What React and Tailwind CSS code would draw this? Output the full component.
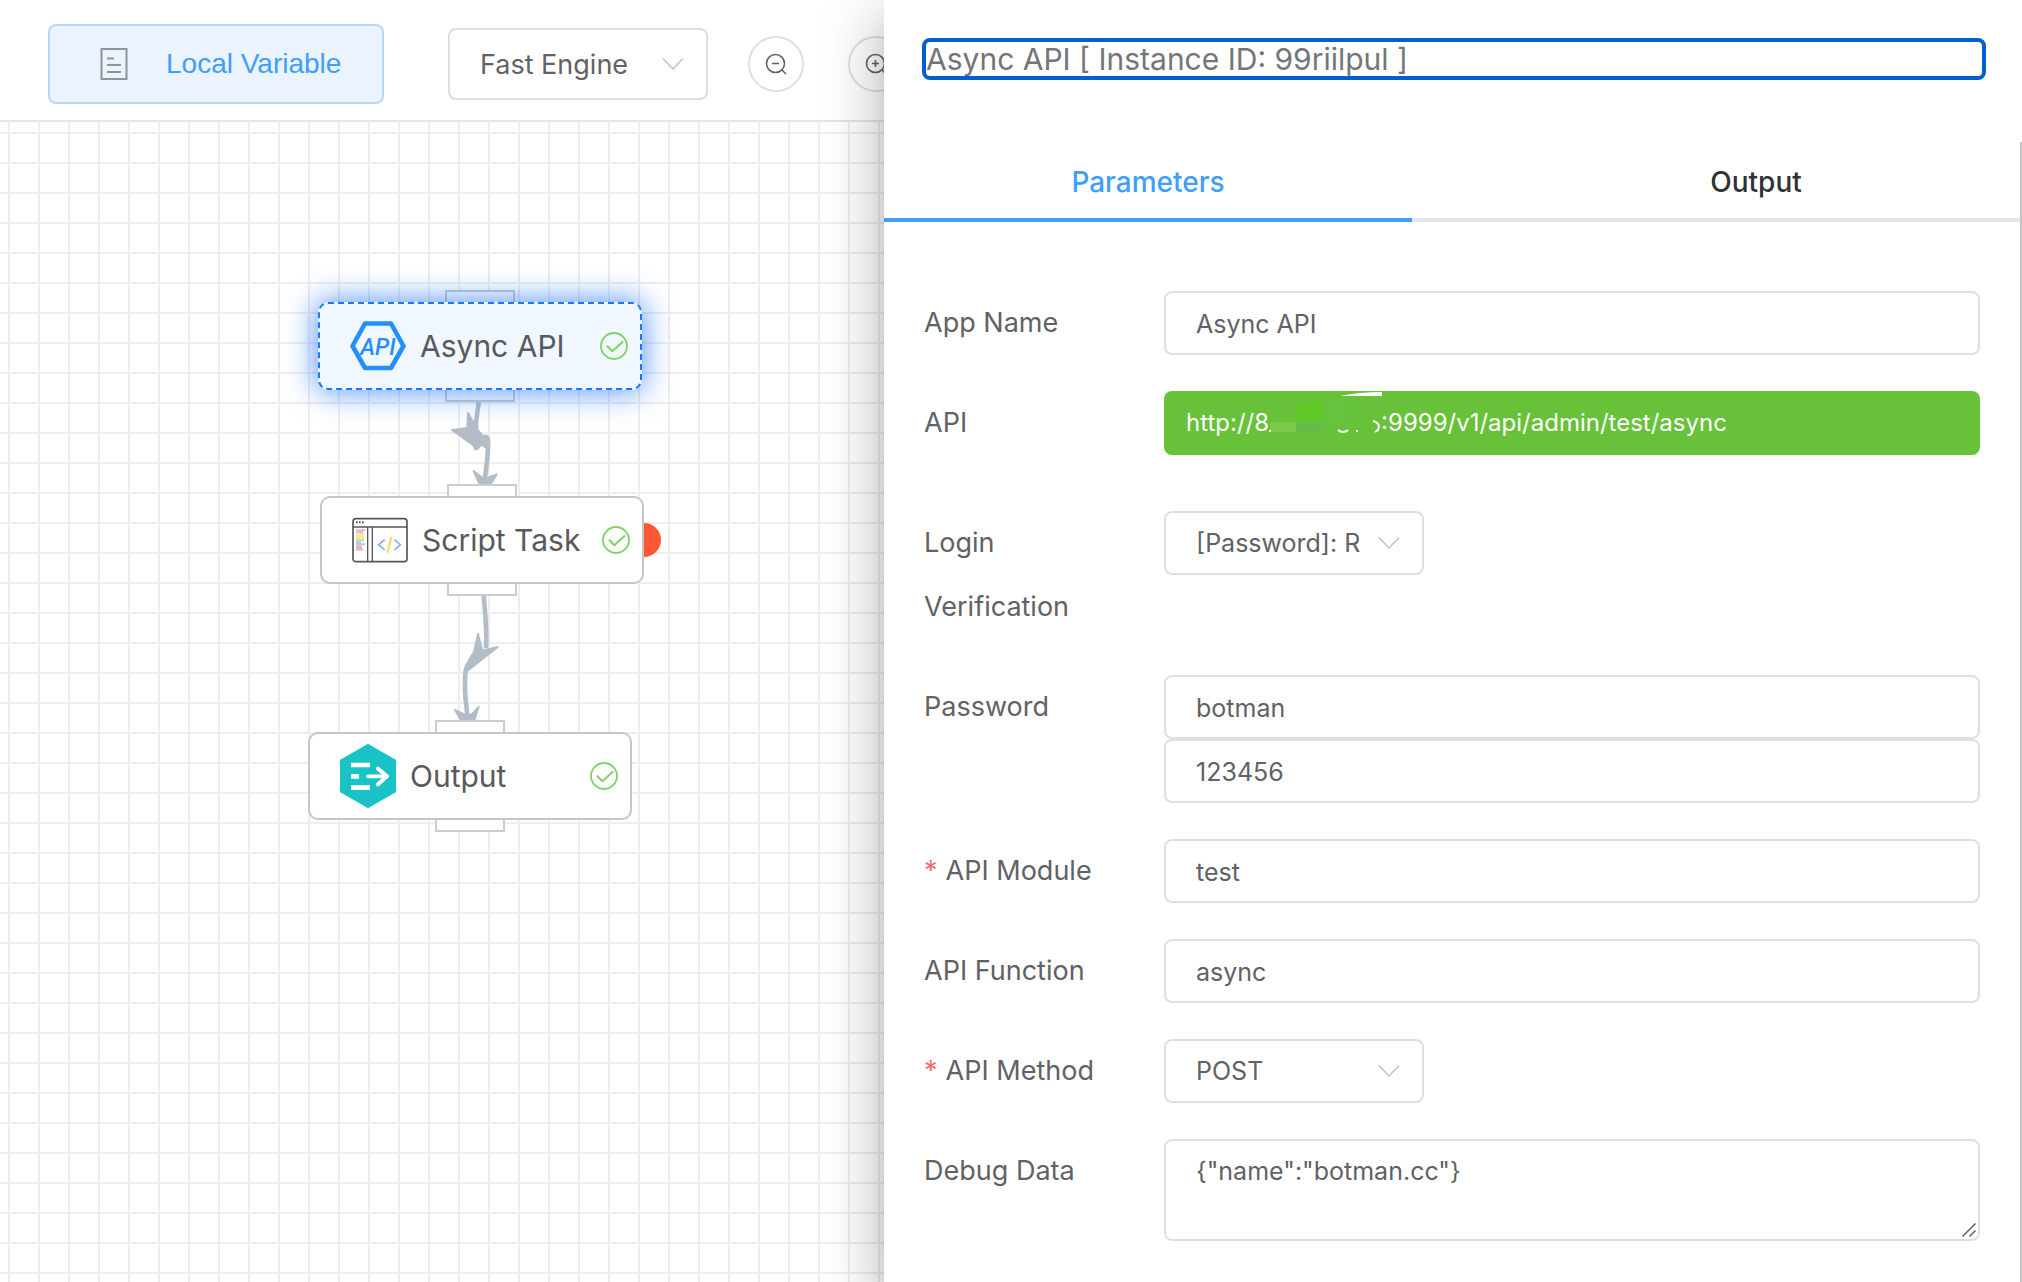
import React from "react";

const DocumentIcon = () => (
  <svg className="h-8 w-7 shrink-0" viewBox="0 0 28 32" fill="none" stroke="#909399" strokeWidth="2" aria-hidden="true">
    <rect x="1.5" y="1" width="25" height="30" />
    <path d="M7 10.5h7M7 17h14M7 24h14" />
  </svg>
);

const Chevron = () => (
  <svg
    className="pointer-events-none absolute top-1/2 right-6 h-3 w-[22px] -translate-y-1/2"
    viewBox="0 0 22 12"
    fill="none"
    stroke="#c0c4cc"
    strokeWidth="1.6"
    strokeLinecap="round"
    aria-hidden="true"
  >
    <path d="M1.500 1L11 11L20.500 1" />
  </svg>
);

const ZoomIcon = ({ plus }) => (
  <svg className="size-[22px] shrink-0" viewBox="0 0 22 22" fill="none" stroke="#606266" strokeWidth="1.6" aria-hidden="true">
    <circle cx="10.500" cy="10.500" r="9" />
    <path d="M17 17l4 4M7 10.500h7" />
    {plus && <path d="M10.500 7v7" />}
  </svg>
);

const CheckIcon = () => (
  <svg className="size-7 shrink-0" viewBox="0 0 28 28" fill="none" stroke="#7ed264" aria-label="Succeeded" role="img">
    <circle cx="14" cy="14" r="13" strokeWidth="1.8" />
    <path d="M7.500 14.200l4.800 5L22.500 10" strokeWidth="2" strokeLinecap="round" strokeLinejoin="round" />
  </svg>
);

const ApiIcon = () => (
  <svg className="h-16 w-14 shrink-0" viewBox="0 0 56 64" aria-hidden="true">
    <path
      d="M15 9.500h26L53.500 32L41 54H15L2.500 32z"
      fill="none"
      stroke="#2490ff"
      strokeWidth="4.600"
      strokeLinejoin="round"
    />
    <text
      x="28"
      y="40.500"
      textAnchor="middle"
      fill="#2490ff"
      className="font-['Roboto',sans-serif] text-[23px] font-medium italic"
    >
      API
    </text>
  </svg>
);

const ScriptIcon = () => (
  <svg className="h-16 w-14 shrink-0" viewBox="0 0 168 192" fill="none" aria-hidden="true">
    <rect x="3" y="32" width="162" height="129" rx="9" stroke="#55565a" strokeWidth="5" />
    <path d="M3 57h162M47 57v104M61 57v104" stroke="#55565a" strokeWidth="4" />
    <path d="M12 43h5M21 43h5M30 43h5" stroke="#55565a" strokeWidth="6" />
    <g strokeWidth="6">
      <path d="M12 67h27" stroke="#ffb0ab" />
      <path d="M12 73h21" stroke="#b0c8f5" />
      <path d="M12 79h27M12 85h24M12 91h24" stroke="#ffe699" />
      <path d="M12 97h24" stroke="#bcd8ae" />
      <path d="M12 103h15M12 109h27" stroke="#b0c8f5" />
      <path d="M12 115h18M12 120h19" stroke="#ffb0ab" />
      <path d="M12 125h21" stroke="#bcd8ae" />
    </g>
    <path d="M98 95L80 110L98 126M127 95L145 110L127 126" stroke="#84ade8" strokeWidth="5" />
    <path d="M118 87L106 134" stroke="#ffd43a" strokeWidth="5" />
  </svg>
);

const OutputIcon = () => (
  <svg className="h-16 w-14 shrink-0" viewBox="0 0 168 192" fill="none" aria-hidden="true">
    <path d="M84 4L164 50V142L84 188L4 142V50z" fill="#19c3c5" stroke="#19c3c5" strokeWidth="8" strokeLinejoin="round" />
    <path d="M33 63h57M33 97h24M33 131h57" stroke="#fff" strokeWidth="14" />
    <path d="M84 97h56" stroke="#fff" strokeWidth="11" strokeLinecap="round" />
    <path d="M114 74l27 23l-27 24" stroke="#fff" strokeWidth="12" strokeLinecap="round" strokeLinejoin="round" />
  </svg>
);

const Edges = () => (
  <svg className="absolute top-[148px] left-[290px] h-[480px] w-[400px]" viewBox="0 0 1200 1440" fill="none" stroke="#b2bdc7" aria-hidden="true">
    <g strokeWidth="14">
      <path d="M566 396C564 430 556 440 558 480" />
      <path d="M556 533C560 540 572 518 580 506C590 492 596 505 594 530C593 580 586 600 583 645" />
      <path d="M581 977C586 1040 592 1080 588 1135" />
      <path d="M540 1175C522 1195 526 1220 525 1260C526 1300 532 1320 533 1350" />
    </g>
    <g fill="#b2bdc7" strokeWidth="6" strokeLinejoin="round">
      <path d="M534 429L562 478L582 502L594 535L570 522L556 536L548 524L486 480L532 474z" />
      <path d="M551 603L578 624H592L620 613L603 641H568z" />
      <path d="M564 1092L577 1142L623 1131L531 1203L527 1196L538 1168L552 1146z" />
      <path d="M495 1320L524 1334H544L566 1311L553 1350H513z" />
    </g>
  </svg>
);

const Port = ({ place }) => (
  <span className={`absolute left-[127px] h-3.5 w-[70px] border-2 border-[#cccccc] bg-white ${place}`} />
);

function FlowNode({ icon, name, selected, breakpoint, position }) {
  return (
    <div className={`absolute h-[88px] w-[324px] ${position}`}>
      <Port place="-top-3" />
      <Port place="-bottom-3" />
      {breakpoint && <span className="absolute top-[27px] -right-[17px] size-[34px] rounded-full bg-[#ff5733]" />}
      <div
        className={`relative flex h-full items-center gap-3.5 rounded-[10px] border-2 pr-3 pl-[30px] ${
          selected
            ? "border-dashed border-[#1879ff] bg-[#f0f7ff] shadow-[0_0_30px_2px_rgba(24,110,255,0.7)]"
            : "border-[#c5c6cb] bg-white"
        }`}
      >
        {icon}
        <span className="grow text-[30px] text-[#58595c]">{name}</span>
        <CheckIcon />
      </div>
    </div>
  );
}

const fieldBox =
  "block w-full rounded-lg border-2 border-[#dcdfe6] bg-white pl-[30px] text-[#606266] outline-none";

function TextField({ id, label, value }) {
  return (
    <input id={id} aria-label={label} defaultValue={value} className={`${fieldBox} h-16 pt-0.5 pr-[30px] text-[25px]`} />
  );
}

function SelectField({ id, label, value, className }) {
  return (
    <div className="relative w-[260px]">
      <select
        id={id}
        aria-label={label}
        defaultValue={value}
        className={`${fieldBox} appearance-none pt-0.5 pr-14 ${className}`}
      >
        <option>{value}</option>
      </select>
      <Chevron />
    </div>
  );
}

function Row({ id, label, required, children }) {
  return (
    <div className="flex items-start">
      <label htmlFor={id} className="w-60 shrink-0 pr-10 text-[27px] leading-[64px] text-[#606266]">
        {required && <span className="mr-2 text-[#f56c6c]">*</span>}
        {label}
      </label>
      <div className="min-w-0 grow">{children}</div>
    </div>
  );
}

/* Mosaic that hides the host part of the address */
const HostMask = () => (
  <svg className="h-[60px] w-28 shrink-0 overflow-visible" viewBox="5 2 112 60" aria-hidden="true">
    <path d="M76 5Q96 1 118 1V5z" fill="#fff" />
    <path d="M32 14Q44 10 58 8V31H32z" fill="#5fc827" />
    <path d="M58 8H84V31H58z" fill="#66c340" />
    <path d="M6 31H32V41H6z" fill="#7ac94b" />
    <path d="M32 31H58V41H32z" fill="#64bd48" />
    <path d="M5 39h2v2h-2z" fill="#fff" />
    <path d="M74 39Q79 43 84 39M92 40h2M109 30Q117 32 114 39L111 41" fill="none" stroke="#fff" strokeWidth="2" />
  </svg>
);

function Drawer() {
  return (
    <aside className="absolute inset-y-0 right-0 flex w-[56.28%] flex-col bg-white shadow-[0_16px_20px_-10px_rgba(0,0,0,0.2),0_32px_48px_4px_rgba(0,0,0,0.14),0_12px_60px_10px_rgba(0,0,0,0.12)]">
      <header className="h-[142px] shrink-0 pt-[38px] pr-9 pl-[38px]">
        <input
          aria-label="Instance title"
          defaultValue="Async API [ Instance ID: 99riilpul ]"
          className="block h-[42px] w-full rounded-lg border-4 border-[#0060d0] text-[30px] text-[#72767b] outline-none"
        />
      </header>
      <div className="flex min-h-0 grow">
        <div className="min-w-0 grow overflow-hidden">
          <div role="tablist" className="flex h-20 border-b-4 border-[#e4e7ed] text-[28px] font-medium">
            <div className="flex w-1/2 pr-10">
              <button role="tab" aria-selected="true" className="-mb-1 grow border-b-4 border-[#409eff] pt-1 text-[#409eff]">
                Parameters
              </button>
            </div>
            <div className="flex w-1/2 pl-10">
              <button role="tab" aria-selected="false" className="-mb-1 grow border-b-4 border-transparent pt-1 text-[#303133]">
                Output
              </button>
            </div>
          </div>
          <form className="flex flex-col gap-9 pt-[69px] pr-10 pl-10">
            <Row id="app-name" label="App Name">
              <TextField id="app-name" label="App Name" value="Async API" />
            </Row>
            <Row id="api" label="API">
              <div className="pb-5">
                <button
                  id="api"
                  type="button"
                  className="flex h-16 w-full items-center rounded-lg bg-[#67c23a] pl-[22px] text-left text-[24px] whitespace-nowrap text-white"
                >
                  <span>http://8</span>
                  <HostMask />
                  <span>:9999/v1/api/admin/test/async</span>
                </button>
              </div>
            </Row>
            <Row id="login" label="Login Verification">
              <SelectField id="login" label="Login Verification" value="[Password]: R" className="h-16 text-[25px]" />
            </Row>
            <Row id="user" label="Password">
              <TextField id="user" label="User name" value="botman" />
              <TextField id="password" label="Password" value="123456" />
            </Row>
            <Row id="module" label="API Module" required>
              <TextField id="module" label="API Module" value="test" />
            </Row>
            <Row id="function" label="API Function">
              <TextField id="function" label="API Function" value="async" />
            </Row>
            <Row id="method" label="API Method" required>
              <SelectField id="method" label="API Method" value="POST" className="h-16 text-[25px]" />
            </Row>
            <Row id="debug" label="Debug Data">
              <div className="relative">
                <textarea
                  id="debug"
                  defaultValue={'{"name":"botman.cc"}'}
                  className={`${fieldBox} h-[102px] resize-none py-2.5 pr-[30px] text-[25px] leading-[40px]`}
                />
                <svg className="pointer-events-none absolute right-1 bottom-1 size-3.5" viewBox="0 0 14 14" stroke="#55565a" strokeWidth="1.400" aria-hidden="true">
                  <path d="M0.500 13.500L13.500 0.500M7.500 13.500L13.500 7.500" />
                </svg>
              </div>
            </Row>
          </form>
        </div>
        <div className="w-0.5 shrink-0 bg-[#c4c4c4]" />
      </div>
    </aside>
  );
}

export default function App() {
  return (
    <div className="relative flex h-screen flex-col overflow-hidden bg-white font-['Inter',sans-serif]">
      <header className="flex h-[122px] shrink-0 items-center border-b-2 border-[#e6e6e6] pt-2 pl-12">
        <button className="flex h-20 w-[336px] shrink-0 items-center gap-[38px] rounded-lg border-2 border-[#b3d8ff] bg-[#ebf3ff] pl-[50px] font-['Liberation_Sans',sans-serif] text-[28px] text-[#409eff]">
          <DocumentIcon />
          Local Variable
        </button>
        <div className="ml-16 shrink-0">
          <SelectField id="engine" label="Engine" value="Fast Engine" className="h-[72px] text-[27px]" />
        </div>
        <div className="ml-10 flex shrink-0 gap-11">
          <button aria-label="Zoom out" className="flex size-14 items-center justify-center rounded-full border-2 border-[#dcdfe6]">
            <ZoomIcon />
          </button>
          <button aria-label="Zoom in" className="flex size-14 items-center justify-center rounded-full border-2 border-[#dcdfe6]">
            <ZoomIcon plus />
          </button>
        </div>
      </header>
      <main className="relative grow bg-[linear-gradient(to_right,#eeeeee_2px,transparent_2px),linear-gradient(to_bottom,#eeeeee_2px,transparent_2px)] bg-[length:30px_30px] bg-[position:8px_10px]">
        <Edges />
        <FlowNode name="Async API" icon={<ApiIcon />} selected position="top-[180px] left-[318px]" />
        <FlowNode name="Script Task" icon={<ScriptIcon />} breakpoint position="top-[374px] left-[320px]" />
        <FlowNode name="Output" icon={<OutputIcon />} position="top-[610px] left-[308px]" />
      </main>
      <Drawer />
    </div>
  );
}
